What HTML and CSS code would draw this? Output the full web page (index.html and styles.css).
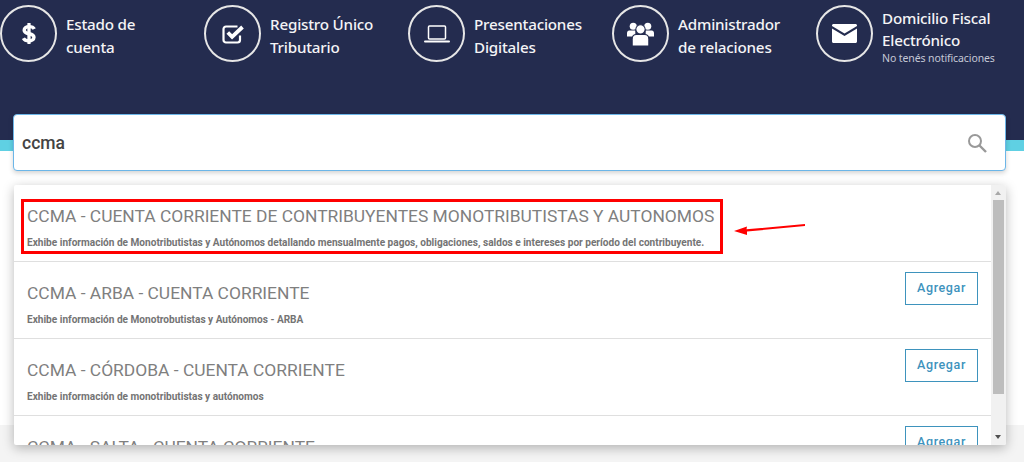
FILE: index.html
```html
<!DOCTYPE html>
<html lang="es">
<head>
<meta charset="utf-8">
<title>Mis servicios</title>
<link rel="stylesheet" href="styles.css">
</head>
<body>
<header class="hero">
  <nav class="shortcuts">
    <a class="shortcut">
      <span class="ring"><svg viewBox="0 0 24 32" width="18" height="27"><path d="M19 10C18 7.800 15.500 6.800 12 6.800c-3.800 0-6.400 1.800-6.400 4.800 0 6.400 13 3.200 13 9.400 0 3-2.900 4.800-6.800 4.800-3.400 0-6-1.100-7.300-3.500" fill="none" stroke="#fff" stroke-width="4.600"/><rect x="9.800" y="2" width="4.400" height="28" rx=".6" fill="#fff"/></svg></span>
      <span class="label">Estado de<br>cuenta</span>
    </a>
    <a class="shortcut">
      <span class="ring"><svg viewBox="0 0 24 24" width="24" height="24"><path d="M19 13.500V18a2.500 2.500 0 0 1-2.500 2.500H5A2.500 2.500 0 0 1 2.500 18V7A2.500 2.500 0 0 1 5 4.500h11.500" fill="none" stroke="#fff" stroke-width="2.200"/><path d="M6.800 10.500l4.300 4.300L21.500 5" fill="none" stroke="#fff" stroke-width="3.800"/></svg></span>
      <span class="label">Registro Único<br>Tributario</span>
    </a>
    <a class="shortcut">
      <span class="ring"><svg viewBox="0 0 26 20" width="26" height="20"><rect x="4.500" y="2" width="17" height="13" rx="1" fill="none" stroke="#fff" stroke-width="1.500"/><rect x="0" y="16.500" width="26" height="2" rx="1" fill="#fff"/></svg></span>
      <span class="label">Presentaciones<br>Digitales</span>
    </a>
    <a class="shortcut">
      <span class="ring"><svg viewBox="0 0 26 24" width="27" height="25"><circle cx="6" cy="5" r="3.400" fill="#fff"/><circle cx="20" cy="5" r="3.400" fill="#fff"/><path d="M0 15v-3.500C0 9.500 1.500 9 3 9h5v6zM26 15v-3.500C26 9.500 24.500 9 23 9h-5v6z" fill="#fff"/><circle cx="13" cy="8" r="4.500" fill="#fff" stroke="#242c4f" stroke-width="1"/><path d="M5 24v-6.500C5 14.500 7 13 9 13h8c2 0 4 1.500 4 4.500V24z" fill="#fff" stroke="#242c4f" stroke-width="1"/></svg></span>
      <span class="label">Administrador<br>de relaciones</span>
    </a>
    <a class="shortcut">
      <span class="ring"><svg viewBox="0 0 25 19" width="25" height="19"><path d="M0 1.500C0 .7.700 0 1.500 0h22c.8 0 1.500.7 1.500 1.500v.6L12.500 9.500 0 2.100z" fill="#fff"/><path d="M0 4.500l12.500 7.400L25 4.500v13c0 .8-.7 1.500-1.500 1.500h-22C.7 19 0 18.300 0 17.500z" fill="#fff"/></svg></span>
      <span class="label label-stacked">Domicilio Fiscal<br>Electrónico<small class="note">No tenés notificaciones</small></span>
    </a>
  </nav>
</header>
<div class="band"></div>
<main class="search-area">
  <div class="search-box">
    <span class="query">ccma</span>
    <svg class="search-icon" viewBox="0 0 20 20" width="20" height="20"><circle cx="8" cy="8" r="6" fill="none" stroke="#999" stroke-width="2"/><path d="M12.500 12.500L19 19" stroke="#999" stroke-width="2.400"/></svg>
  </div>
  <div class="results">
    <ul class="list">
      <li class="item">
        <div class="item-text">
          <h3 class="item-title">CCMA - CUENTA CORRIENTE DE CONTRIBUYENTES MONOTRIBUTISTAS Y AUTONOMOS</h3>
          <p class="item-desc">Exhibe información de Monotributistas y Autónomos detallando mensualmente pagos, obligaciones, saldos e intereses por período del contribuyente.</p>
        </div>
        <span class="mark"></span>
        <svg class="arrow" viewBox="0 0 72 14" width="72" height="14"><path d="M0 10L13 5.500 12.500 8.300 71 3 71 5 13 10.500 13 14z" fill="#f00"/></svg>
      </li>
      <li class="item">
        <div class="item-text">
          <h3 class="item-title">CCMA - ARBA - CUENTA CORRIENTE</h3>
          <p class="item-desc">Exhibe información de Monotrobutistas y Autónomos - ARBA</p>
        </div>
        <a class="add">Agregar</a>
      </li>
      <li class="item">
        <div class="item-text">
          <h3 class="item-title">CCMA - CÓRDOBA - CUENTA CORRIENTE</h3>
          <p class="item-desc">Exhibe información de monotributistas y autónomos</p>
        </div>
        <a class="add">Agregar</a>
      </li>
      <li class="item">
        <div class="item-text">
          <h3 class="item-title">CCMA - SALTA - CUENTA CORRIENTE</h3>
        </div>
        <a class="add">Agregar</a>
      </li>
    </ul>
    <div class="scrollbar">
      <span class="tri tri-up"></span>
      <span class="thumb"></span>
      <span class="tri tri-down"></span>
    </div>
  </div>
</main>
<div class="footer-strip"></div>
</body>
</html>
```
FILE: styles.css
```css
* { box-sizing: border-box; }
html, body { margin: 0; height: 462px; overflow: hidden; background: #fff; }
body { position: relative; font-family: Roboto, sans-serif; }
.hero { height: 140px; background: #242c4f; }
.shortcuts { display: flex; padding-top: 5px; }
.shortcut { display: flex; width: 204px; height: 57px; gap: 9px; color: #fff; align-items: center; }
.ring { flex: none; width: 57px; height: 57px; border: 2px solid #e6e6e6; border-radius: 50%; display: flex; align-items: center; justify-content: center; }
.label { font-family: "Noto Sans", sans-serif; font-size: 15.200px; font-weight: 500; line-height: 23px; color: #f4f4f6; letter-spacing: -.2px; margin-top: 4px; }
.label-stacked { margin-top: 3px; line-height: 22.500px; }
.note { display: block; font-size: 10.500px; font-weight: 400; line-height: 12px; color: #c4c8d6; letter-spacing: -.1px; }
.band { height: 11px; background: #5fd0e3; }
.search-area { position: absolute; inset: 114px 18px 0 13px; z-index: 1; }
.search-box { height: 57px; width: 993px; background: #fff; border: 1px solid #6cb6e8; border-radius: 4px; box-shadow: 0 2px 5px rgba(0,0,0,.18); display: flex; align-items: center; justify-content: space-between; padding: 0 18px 0 8px; }
.query { font-size: 17.500px; font-weight: 500; color: #444; }
.search-icon { display: block; margin-top: 1px; }
.results { position: absolute; left: 1px; top: 71px; width: 992px; height: 260px; display: flex; background: #fff; box-shadow: 0 3px 12px rgba(0,0,0,.28); overflow: hidden; border-radius: 2px; }
.list { flex: 1; margin: 0; padding: 0; list-style: none; }
.item { position: relative; display: flex; justify-content: space-between; align-items: flex-start; height: 77px; padding: 21px 13px 0 13px; border-bottom: 1px solid #dfdfdf; }
.item-title { margin: 0; font-size: 17.420px; line-height: 20px; font-weight: 400; color: #7f7f7f; white-space: nowrap; }
.item-desc { margin: 10px 0 0; font-size: 10.080px; line-height: 14px; font-weight: 700; color: #747474; white-space: nowrap; }
.add { display: block; margin-top: -11px; width: 73px; height: 33px; border: 1px solid #3e93bd; color: #3e93bd; font-size: 12.500px; font-weight: 500; letter-spacing: .6px; text-align: center; line-height: 30px; }
.mark { position: absolute; left: 7px; top: 14px; width: 702px; height: 55px; border: 3px solid #f00; }
.arrow { position: absolute; left: 720px; top: 36px; }
.scrollbar { flex: none; width: 15px; height: 100%; background: #f1f1f1; position: relative; }
.thumb { position: absolute; left: 2px; top: 15px; width: 11px; height: 194px; background: #bdbdbd; }
.tri { position: absolute; left: 4px; width: 0; height: 0; border-left: 3.500px solid transparent; border-right: 3.500px solid transparent; }
.tri-up { top: 6px; border-bottom: 4px solid #a8a8a8; }
.tri-down { bottom: 6px; border-top: 4px solid #505050; }
.footer-strip { position: absolute; left: 0; right: 0; top: 425px; bottom: 0; background: #f4f4f4; }
```
